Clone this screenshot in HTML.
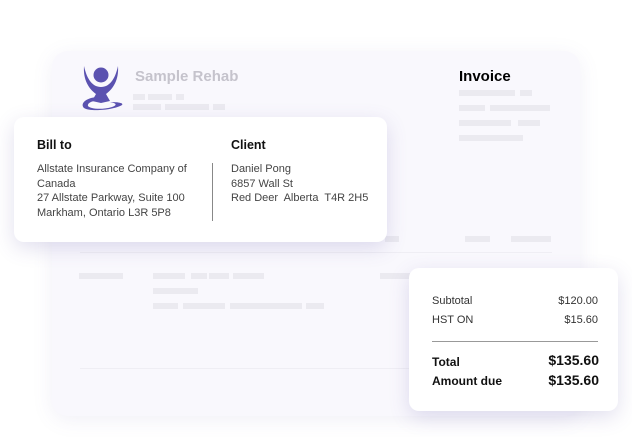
<!DOCTYPE html>
<html><head><meta charset="utf-8"><style>
*{margin:0;padding:0;box-sizing:border-box}
body{width:632px;height:437px;background:#fff;position:relative;overflow:hidden;font-family:"Liberation Sans",sans-serif}
.bg{position:absolute;left:52px;top:51px;width:528px;height:365px;background:#f9f8fd;border-radius:16px;box-shadow:0 4px 20px rgba(120,110,180,.10)}
.g{position:absolute;background:#ebeaf0;height:6px}
.card{position:absolute;background:#fff;border-radius:10px;box-shadow:0 6px 20px rgba(90,80,160,.18)}
.h{font-weight:bold;font-size:12.5px;color:#111;position:absolute}
.t{font-size:11px;color:#444;line-height:14.5px;position:absolute}
</style></head><body>
<div class="bg"></div>
<svg style="position:absolute;left:80px;top:64px" width="46" height="48" viewBox="0 0 46 48">
<circle cx="21" cy="11" r="7.5" fill="#5b52b0"/>
<path d="M4 2 C3 16 9 25 16 30 L12 37 L21 39 L30 37 L26 30 C33 25 39 16 38 2 C35 16 29 23 21 23 C13 23 7 16 4 2Z" fill="#5b52b0"/>
<path d="M17 33 C5 34 0 40 4 44 C10 48 34 46 42 41 C44 39 38 38 30 38 C36 39 38 41 32 43 C22 46 10 45 8 42 C7 38 15 36 24 36 Z" fill="#5b52b0"/>
</svg>
<div style="position:absolute;left:135px;top:68px;font-weight:bold;font-size:15px;color:#c5c3cc">Sample Rehab</div>
<div class="g" style="left:133px;top:94px;width:12px"></div><div class="g" style="left:148px;top:94px;width:24px"></div><div class="g" style="left:176px;top:94px;width:8px"></div>
<div class="g" style="left:133px;top:104px;width:28px"></div><div class="g" style="left:165px;top:104px;width:44px"></div><div class="g" style="left:213px;top:104px;width:12px"></div>
<div style="position:absolute;left:459px;top:68px;font-weight:bold;font-size:15px;color:#000">Invoice</div>
<div class="g" style="left:459px;top:90px;width:56px"></div><div class="g" style="left:520px;top:90px;width:12px"></div>
<div class="g" style="left:459px;top:105px;width:26px"></div><div class="g" style="left:490px;top:105px;width:60px"></div>
<div class="g" style="left:459px;top:120px;width:52px"></div><div class="g" style="left:518px;top:120px;width:22px"></div>
<div class="g" style="left:459px;top:135px;width:64px"></div>
<div class="g" style="left:385px;top:236px;width:14px"></div><div class="g" style="left:465px;top:236px;width:25px"></div><div class="g" style="left:511px;top:236px;width:40px"></div>
<div style="position:absolute;left:80px;top:252px;width:472px;height:1px;background:#efeef4"></div>
<div class="g" style="left:79px;top:273px;width:44px"></div>
<div class="g" style="left:153px;top:273px;width:32px"></div><div class="g" style="left:191px;top:273px;width:16px"></div><div class="g" style="left:209px;top:273px;width:20px"></div><div class="g" style="left:233px;top:273px;width:31px"></div><div class="g" style="left:380px;top:273px;width:30px"></div>
<div class="g" style="left:153px;top:288px;width:45px"></div>
<div class="g" style="left:153px;top:303px;width:25px"></div><div class="g" style="left:183px;top:303px;width:42px"></div><div class="g" style="left:230px;top:303px;width:72px"></div><div class="g" style="left:306px;top:303px;width:18px"></div>
<div style="position:absolute;left:80px;top:368px;width:330px;height:1px;background:#efeef4"></div>
<div class="card" style="left:14px;top:117px;width:373px;height:125px">
<div class="h" style="left:23px;top:21px">Bill to</div>
<div class="t" style="left:23px;top:45px">Allstate Insurance Company of<br>Canada<br>27 Allstate Parkway, Suite 100<br>Markham, Ontario L3R 5P8</div>
<div style="position:absolute;left:198px;top:46px;width:1px;height:58px;background:#888"></div>
<div class="h" style="left:217px;top:21px">Client</div>
<div class="t" style="left:217px;top:45px">Daniel Pong<br>6857 Wall St<br>Red Deer&nbsp; Alberta&nbsp; T4R 2H5</div>
</div>
<div class="card" style="left:409px;top:268px;width:209px;height:143px">
<div class="t" style="left:23px;top:26px;color:#333">Subtotal</div><div class="t" style="right:20px;top:26px;color:#333">$120.00</div>
<div class="t" style="left:23px;top:45px;color:#333">HST ON</div><div class="t" style="right:20px;top:45px;color:#333">$15.60</div>
<div style="position:absolute;left:23px;right:20px;top:73px;height:1px;background:#999"></div>
<div class="h" style="left:23px;top:87px;font-size:12px">Total</div><div class="h" style="right:19px;top:84px;font-size:14px">$135.60</div>
<div class="h" style="left:23px;top:106px;font-size:12px">Amount due</div><div class="h" style="right:19px;top:104px;font-size:14px">$135.60</div>
</div>
</body></html>
